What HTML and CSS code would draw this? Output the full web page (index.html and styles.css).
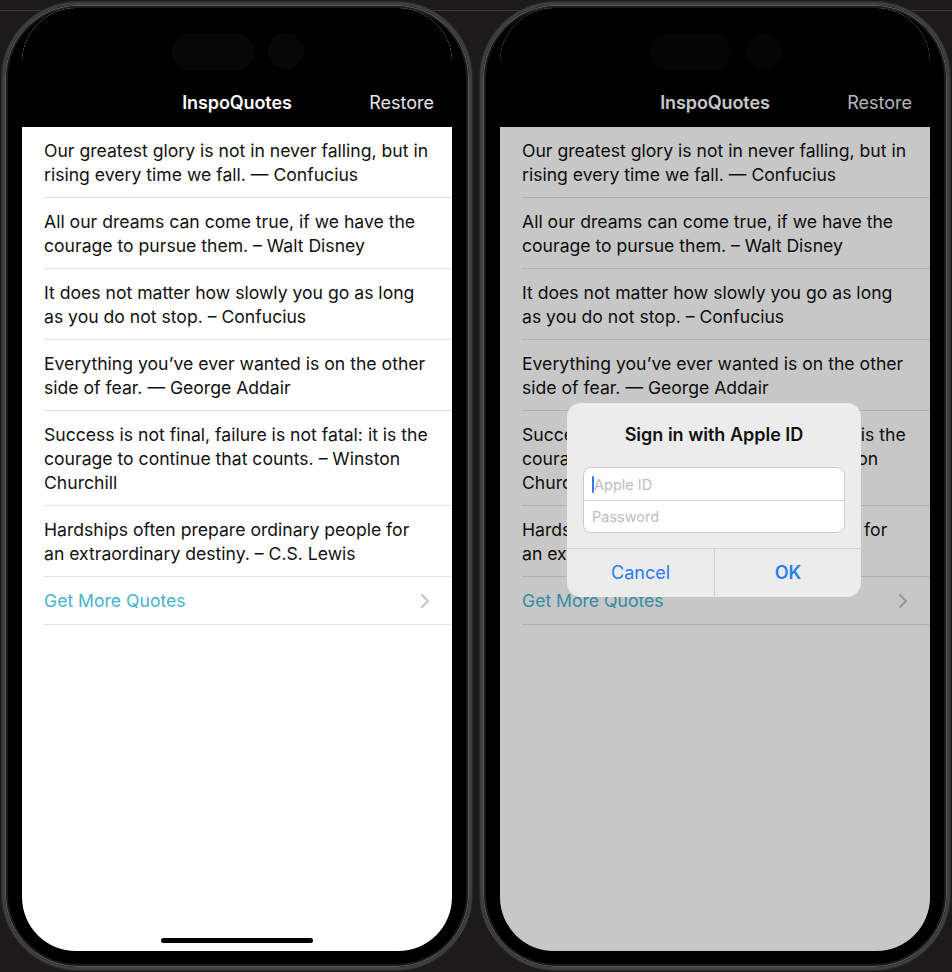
FILE: index.html
```html
<!DOCTYPE html>
<html lang="en">
<head>
<meta charset="utf-8">
<title>InspoQuotes</title>
<link rel="stylesheet" href="styles.css">
</head>
<body>
<main class="stage">
  <section class="phone">
    <div class="screen">
      <header class="nav">
        <div class="island"><span class="pill"></span><span class="cam"></span></div>
        <div class="bar"><span></span><h1 class="title">InspoQuotes</h1><span class="restore">Restore</span></div>
      </header>
      <ul class="list">
        <li class="row">Our greatest glory is not in never falling, but in<br>rising every time we fall. — Confucius</li>
        <li class="row">All our dreams can come true, if we have the<br>courage to pursue them. – Walt Disney</li>
        <li class="row">It does not matter how slowly you go as long<br>as you do not stop. – Confucius</li>
        <li class="row">Everything you’ve ever wanted is on the other<br>side of fear. — George Addair</li>
        <li class="row">Success is not final, failure is not fatal: it is the<br>courage to continue that counts. – Winston<br>Churchill</li>
        <li class="row">Hardships often prepare ordinary people for<br>an extraordinary destiny. – C.S. Lewis</li>
        <li class="row more"><span>Get More Quotes</span><svg class="chev" width="10" height="16" viewBox="0 0 10 16"><polyline points="2,2 8,8 2,14" fill="none" stroke="#c4c4c8" stroke-width="2.2" stroke-linecap="round" stroke-linejoin="round"/></svg></li>
      </ul>
      <div class="home"></div>
    </div>
  </section>

  <section class="phone">
    <div class="screen">
      <header class="nav">
        <div class="island"><span class="pill"></span><span class="cam"></span></div>
        <div class="bar"><span></span><h1 class="title">InspoQuotes</h1><span class="restore">Restore</span></div>
      </header>
      <ul class="list">
        <li class="row">Our greatest glory is not in never falling, but in<br>rising every time we fall. — Confucius</li>
        <li class="row">All our dreams can come true, if we have the<br>courage to pursue them. – Walt Disney</li>
        <li class="row">It does not matter how slowly you go as long<br>as you do not stop. – Confucius</li>
        <li class="row">Everything you’ve ever wanted is on the other<br>side of fear. — George Addair</li>
        <li class="row">Success is not final, failure is not fatal: it is the<br>courage to continue that counts. – Winston<br>Churchill</li>
        <li class="row">Hardships often prepare ordinary people for<br>an extraordinary destiny. – C.S. Lewis</li>
        <li class="row more"><span>Get More Quotes</span><svg class="chev" width="10" height="16" viewBox="0 0 10 16"><polyline points="2,2 8,8 2,14" fill="none" stroke="#c4c4c8" stroke-width="2.2" stroke-linecap="round" stroke-linejoin="round"/></svg></li>
      </ul>
      <div class="dim"></div>
      <div class="alert">
        <h2 class="alert-title">Sign in with Apple ID</h2>
        <div class="fields">
          <div class="field"><span class="caret"></span>Apple ID</div>
          <div class="field">Password</div>
        </div>
        <div class="actions">
          <span class="action">Cancel</span>
          <span class="action primary">OK</span>
        </div>
      </div>
    </div>
  </section>
</main>
</body>
</html>
```

FILE: styles.css
```css
* { box-sizing: border-box; }

html, body { margin: 0; padding: 0; }

body {
  width: 952px;
  height: 972px;
  overflow: hidden;
  background:
    linear-gradient(to bottom, transparent 10px, #3a3a3a 10px, #3a3a3a 11px, transparent 11px),
    #1c1b19;
  font-family: Inter, "Noto Sans", sans-serif;
}

.stage {
  display: flex;
  gap: 8px;
  padding: 2px 0 0 2px;
}

.phone {
  width: 470px;
  height: 968px;
  flex: none;
  display: flex;
  border-radius: 76px;
  background: #000;
  border: 3px solid #3e3e3e;
  box-shadow: inset 0 0 0 1px #5c5c5c, inset 0 0 0 3px #1a1a1a, 0 0 0 1px #2a2a2a;
  padding: 3px 17px 16px;
}

.screen {
  flex: 1;
  position: relative;
  display: flex;
  flex-direction: column;
  background: #fff;
  border-radius: 54px;
  overflow: hidden;
}

.nav {
  height: 119px;
  flex: none;
  background: #000;
  display: flex;
  flex-direction: column;
  justify-content: space-between;
  padding: 25px 0 12px;
}

.island {
  display: flex;
  justify-content: center;
  gap: 14px;
  padding-left: 2px;
}

.pill {
  width: 82px;
  height: 38px;
  border-radius: 19px;
  background: #060606;
}

.cam {
  width: 36px;
  height: 36px;
  border-radius: 50%;
  background: #060606;
}

.bar {
  display: grid;
  grid-template-columns: 1fr auto 1fr;
  align-items: center;
  padding: 0 18px;
  line-height: 24px;
}

.title {
  margin: 0;
  font-size: 18px;
  font-weight: 600;
  color: #fff;
  letter-spacing: -0.1px;
}

.restore {
  justify-self: end;
  font-size: 18px;
  color: #e8e8e8;
}

.list {
  list-style: none;
  margin: 0;
  padding: 0;
}

.row {
  margin-left: 22px;
  padding: 12px 18px 10px 0;
  border-bottom: 1px solid #e2e2e2;
  font-size: 17.6px;
  line-height: 24px;
  color: #111;
  white-space: nowrap;
}

.more {
  height: 48px;
  padding: 0 22px 0 0;
  display: flex;
  align-items: center;
  justify-content: space-between;
  color: #45b3cf;
}

.chev { display: block; }

.home {
  margin: auto auto 8px;
  width: 152px;
  height: 5px;
  border-radius: 3px;
  background: #000;
}

.dim {
  position: absolute;
  inset: 0;
  background: rgba(0, 0, 0, 0.22);
}

.alert {
  position: absolute;
  left: 67px;
  top: 395px;
  width: 294px;
  background: #ececec;
  border-radius: 14px;
  text-align: center;
}

.alert-title {
  margin: 0;
  padding-top: 20px;
  font-size: 18px;
  line-height: 24px;
  font-weight: 600;
  color: #111;
}

.fields {
  margin: 20px 16px 15px;
  background: #fff;
  border: 1px solid #cacaca;
  border-radius: 8px;
  text-align: left;
}

.field {
  height: 32px;
  display: flex;
  align-items: center;
  padding-left: 8px;
  font-size: 14.5px;
  color: #bdbdbd;
}

.field + .field { border-top: 1px solid #d4d4d4; }

.caret {
  width: 2px;
  height: 17px;
  background: #3478f6;
  border-radius: 1px;
}

.actions {
  display: grid;
  grid-template-columns: 1fr 1fr;
  border-top: 1px solid #cfcfcf;
}

.action {
  height: 48px;
  line-height: 48px;
  font-size: 18px;
  color: #2a7ef3;
}

.action + .action { border-left: 1px solid #cfcfcf; }

.primary { font-weight: 600; }
```
